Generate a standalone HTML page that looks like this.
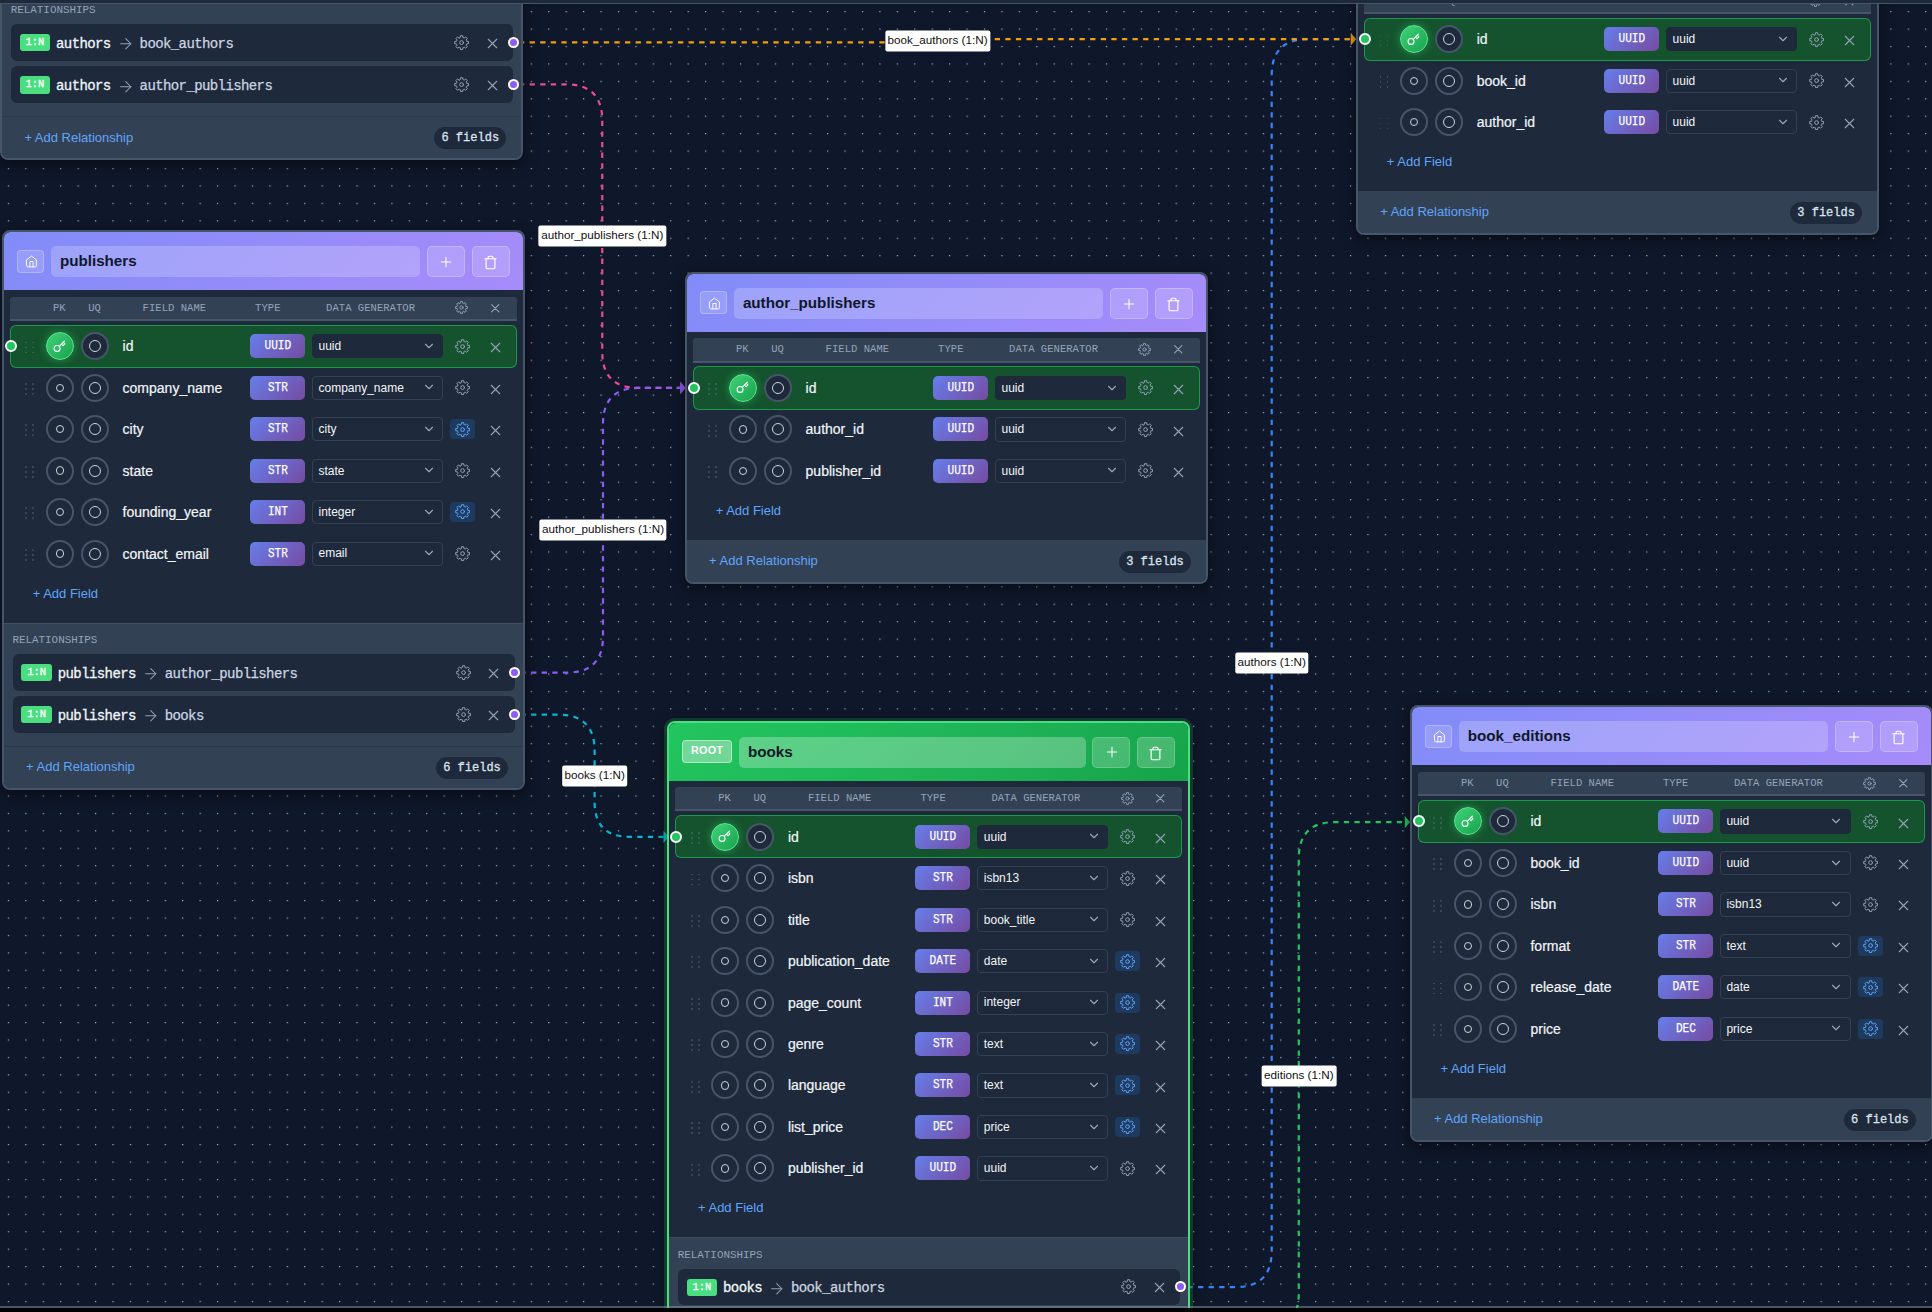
<!DOCTYPE html>
<html><head><meta charset="utf-8"><title>Schema Designer</title><style>
*{box-sizing:border-box;margin:0;padding:0}
html,body{width:1932px;height:1312px;overflow:hidden;background:#000;font-family:"Liberation Sans",sans-serif}
#canvas{position:absolute;left:0;top:0;width:1932px;height:1308px;background:#0f172a;overflow:hidden}
#topbar{position:absolute;left:0;top:0;width:1932px;height:4.1px;background:#1e293b;border-bottom:1.4px solid #475569;z-index:50}
#botline{position:absolute;left:0;top:1306px;width:1932px;height:2px;background:rgba(148,163,184,0.45);z-index:50}
.dots{position:absolute;left:0;top:0}
.edges{position:absolute;left:0;top:0;z-index:1}
.elab{position:absolute;z-index:2;transform:translate(-50%,-50%);background:#fff;border-radius:2px;padding:0 2.6px;height:21.2px;line-height:19.2px;font-size:11.7px;color:#111;white-space:nowrap}
.tbl{position:absolute;width:523px;border:2px solid #475569;border-radius:8px;background:#1e293b;overflow:hidden;z-index:5;box-shadow:0 4px 14px rgba(0,0,0,0.5)}
.tbl.root{border-color:#4ade80;box-shadow:0 0 0 3px rgba(34,197,94,0.22),0 4px 14px rgba(0,0,0,0.5)}
.hdr{position:absolute;left:0;top:0;width:519px;height:58px;border-radius:6px 6px 0 0;background:linear-gradient(135deg,#818cf8 0%,#a78bfa 100%)}
.root .hdr{background:linear-gradient(135deg,#22c55e 0%,#1eb356 60%,#16a34a 100%)}
.root .name{background:rgba(255,255,255,0.27)}
.root .hbtn{background:rgba(255,255,255,0.2);border-color:rgba(255,255,255,0.2)}
.homeb{position:absolute;left:13.3px;top:17.5px;width:27px;height:23px;border-radius:4px;background:rgba(255,255,255,0.15);border:1px solid rgba(255,255,255,0.26)}
.homeb .ic{position:absolute;left:6.5px;top:4.5px;width:13px;height:13px;stroke:#fff;stroke-width:1.8}
.rootb{position:absolute;left:13.2px;top:17.5px;width:49.4px;height:22.5px;border-radius:4px;background:rgba(255,255,255,0.36);border:1px solid rgba(255,255,255,0.45);color:#fff;font-weight:700;font-size:10.8px;text-align:center;line-height:19px;letter-spacing:0.2px}
.name{position:absolute;left:47.2px;top:14px;width:368.8px;height:31px;border-radius:5px;background:rgba(255,255,255,0.2);font-weight:700;font-size:15.2px;color:#0f172a;line-height:29.6px;padding-left:8.8px}
.hbtn{position:absolute;top:14.1px;width:38px;height:31px;border-radius:5px;background:rgba(255,255,255,0.17);border:1px solid rgba(255,255,255,0.24)}
.hbtn .plus{position:absolute;left:10.6px;top:6.6px;width:16px;height:16px;stroke:#fff;stroke-width:1.6}
.hbtn .trash{position:absolute;left:10.2px;top:7.8px;width:15px;height:15px;stroke:#fff;stroke-width:1.9}
.ic{fill:none;stroke-linecap:round;stroke-linejoin:round;display:block}
.colh{position:absolute;left:6.2px;top:64.6px;width:506.9px;height:24.2px;background:#334155;border-bottom:2px solid #475569;border-radius:3px 3px 0 0}
.ct{position:absolute;top:0;height:22.2px;line-height:22.2px;font-family:"Liberation Mono",monospace;font-size:10.5px;color:#94a3b8;white-space:nowrap;letter-spacing:0.05px}
.cg{position:absolute;top:4.6px;width:13px;height:13px;margin-left:1px}
.cg .ic{width:13px;height:13px;stroke:#94a3b8;stroke-width:1.75}
.cx{position:absolute;top:3.8px;width:14.5px;height:14.5px;margin-left:1.2px}
.cx .ic{width:14.5px;height:14.5px;stroke:#94a3b8;stroke-width:1.8}
.pkrow{position:absolute;left:6.3px;width:506.8px;height:43.2px;background:#14532d;border:1.5px solid rgba(34,197,94,0.62);border-radius:6px}
.row{position:absolute;left:0;width:519px;height:40px}
.drag{position:absolute;left:21.5px;top:15.3px;width:9px;height:12px}
.drag i{position:absolute;width:1.9px;height:1.9px;border-radius:50%;background:rgba(148,163,184,0.3)}
.drag i:nth-child(1){left:0;top:0}.drag i:nth-child(2){left:7.1px;top:0}
.drag i:nth-child(3){left:0;top:5px}.drag i:nth-child(4){left:7.1px;top:5px}
.drag i:nth-child(5){left:0;top:10px}.drag i:nth-child(6){left:7.1px;top:10px}
.circ{position:absolute;top:6px;width:28px;height:28px;border-radius:50%;border:2px solid #475569}
.circ.c1{left:42px}
.circ.c2{left:77.1px}
.circ.c1,.circ.c2{background:#1e293b}
.circ.c1 b{position:absolute;left:50%;top:50%;width:8.4px;height:8.4px;margin:-4.2px 0 0 -4.2px;border-radius:50%;border:1px solid #cbd5e1}
.circ.c2 b{position:absolute;left:50%;top:50%;width:12px;height:12px;margin:-6px 0 0 -6px;border-radius:50%;border:1px solid #cbd5e1}
.circ.pk{left:42px;border:1.5px solid #5ee895;background:linear-gradient(135deg,#3fd27a 0%,#17a34b 100%);box-shadow:0 0 8px rgba(74,222,128,0.45)}
.circ.pk .ic{position:absolute;left:6.3px;top:6.5px;width:13px;height:13px;stroke:#fff;stroke-width:2}
.fname{position:absolute;left:118.7px;top:0;height:40px;line-height:40px;font-size:14px;color:#f1f5f9;white-space:nowrap;-webkit-text-stroke:0.2px #f1f5f9}
.badge{position:absolute;left:246.3px;top:8px;width:54.6px;height:24px;border-radius:5px;background:linear-gradient(135deg,#667eea 0%,#764ba2 100%);color:#fff;font-family:"Liberation Mono",monospace;font-size:13.2px;text-align:center;line-height:24px}
.badge span{display:inline-block;transform:scaleX(0.84);-webkit-text-stroke:0.25px #fff}
.sel{position:absolute;left:308px;top:8px;width:131px;height:24.2px;border-radius:4px;border:1px solid #334155;background:#1e293b}
.sel.selpk{border-color:#1e293b}
.sel span{position:absolute;left:5.6px;top:0.9px;line-height:21.6px;font-size:12px;color:#f1f5f9}
.sel .chev{position:absolute;left:108.7px;top:3.6px;width:14px;height:14px;stroke:#9aa8bd;stroke-width:1.9}
.gbtn{position:absolute;left:445.9px;top:10px;width:25px;height:20px;border-radius:4px}
.gbtn.hl{background:#1e3a5f}
.gbtn .ic{position:absolute;left:4.9px;top:2.4px;width:15.2px;height:15.2px;stroke:#94a3b8;stroke-width:1.55}
.gbtn.hl .ic{stroke:#60a5fa}
.xbtn{position:absolute;left:483.3px;top:13.1px;width:17px;height:17px}
.xbtn .ic{width:17px;height:17px;stroke:#94a3b8;stroke-width:1.6}
.handle{position:absolute;width:12px;height:12px;border-radius:50%;border:2px solid #fff;z-index:3}
.handle.hg{background:#22c55e}
.handle.hp{width:11px;height:11px;background:#8b5cf6}
.addf{position:absolute;left:28.8px;height:16px;line-height:16px;font-size:13px;color:#60a5fa;white-space:nowrap}
.rels{position:absolute;left:0;width:519px;background:#334155;box-shadow:inset 0 1px 0 rgba(71,85,105,0.7)}
.rtitle{position:absolute;left:8.5px;top:10.2px;line-height:14px;font-family:"Liberation Mono",monospace;font-size:10.9px;color:#94a3b8}
.ritem{position:absolute;left:8.8px;width:501.9px;height:36.8px;border-radius:6px;background:#1e293b;display:flex;align-items:center;padding-left:8.6px}
.rbadge{flex:none;width:30.7px;height:17.4px;margin-top:0.6px;border-radius:3px;background:#4ade80;color:#fff;font-family:"Liberation Mono",monospace;font-size:10.5px;text-align:center;line-height:17.4px;-webkit-text-stroke:0.3px #fff}
.rsrc{flex:none;margin-left:5.8px;position:relative;top:1.5px;font-family:"Liberation Mono",monospace;font-size:14px;letter-spacing:-0.6px;color:#f1f5f9;white-space:nowrap;line-height:20px;-webkit-text-stroke:0.3px #f1f5f9}
.ritem .arr{flex:none;margin-left:6.4px;position:relative;top:1.8px;width:17.5px;height:17.5px;stroke:#94a3b8;stroke-width:1.4}
.rdst{flex:none;margin-left:5px;position:relative;top:1.5px;font-family:"Liberation Mono",monospace;font-size:14px;letter-spacing:-0.6px;color:#cbd5e1;white-space:nowrap;line-height:20px;-webkit-text-stroke:0.25px #cbd5e1}
.rgear{position:absolute;left:442.9px;top:10.8px;width:15.2px;height:15.2px}
.rgear .ic{width:15.2px;height:15.2px;stroke:#94a3b8;stroke-width:1.55}
.rx{position:absolute;left:472.7px;top:10.9px;width:17px;height:17px}
.rx .ic{width:17px;height:17px;stroke:#94a3b8;stroke-width:1.6}
.foot{position:absolute;left:0;width:519px;height:44px;background:#334155}
.foot.ftl{box-shadow:inset 0 1px 0 rgba(30,41,59,0.35)}
.foot.ftl .addr,.foot.ftl .pill{margin-top:0.8px}
.addr{position:absolute;left:22.2px;top:13px;line-height:16px;font-size:13px;color:#60a5fa;white-space:nowrap}
.pill{position:absolute;left:431px;top:9.8px;width:74.2px;height:24px;border-radius:12px;background:#1e293b;border:1px solid rgba(71,85,105,0.55);color:#dbe3ee;font-family:"Liberation Mono",monospace;font-size:12px;text-align:center;line-height:23px;-webkit-text-stroke:0.3px #dbe3ee}
</style></head>
<body>
<div id="canvas">
<svg class="dots" width="1932" height="1312"><defs><pattern id="dp" x="7.83" y="11.07" width="17.43" height="17.43" patternUnits="userSpaceOnUse"><rect x="0" y="0" width="1.2" height="1.2" fill="#aab3c2"/></pattern></defs><rect width="1932" height="1312" fill="url(#dp)"/></svg>
<svg class="edges" width="1932" height="1312" viewBox="0 0 1932 1312"><path d="M1187.40 1287.10 L1235.70 1287.10 Q1271.70 1287.10 1271.70 1251.10 L1271.70 75.20 Q1271.70 39.20 1307.70 39.20 L1351.50 39.20" stroke="#3b82f6" stroke-width="2.2" fill="none" stroke-dasharray="5.3 5.3"/><path d="M1350.80 33.10 L1356.00 39.20 L1350.80 45.30 Z" fill="#3b82f6"/><path d="M519.00 42.30 L935.95 42.30 Q937.50 42.30 937.50 40.75 L937.50 40.75 Q937.50 39.20 939.05 39.20 L1351.50 39.20" stroke="#f59e0b" stroke-width="2.2" fill="none" stroke-dasharray="5.3 5.3"/><path d="M1350.80 33.10 L1356.00 39.20 L1350.80 45.30 Z" fill="#f59e0b"/><path d="M519.00 84.40 L566.25 84.40 Q602.25 84.40 602.25 120.40 L602.25 351.90 Q602.25 387.90 638.25 387.90 L681.00 387.90" stroke="#ec4899" stroke-width="2.2" fill="none" stroke-dasharray="5.3 5.3"/><path d="M680.30 381.80 L685.50 387.90 L680.30 394.00 Z" fill="#ec4899"/><path d="M520.50 672.60 L567.00 672.60 Q603.00 672.60 603.00 636.60 L603.00 423.90 Q603.00 387.90 639.00 387.90 L681.00 387.90" stroke="#8b5cf6" stroke-width="2.2" fill="none" stroke-dasharray="5.3 5.3"/><path d="M680.30 381.80 L685.50 387.90 L680.30 394.00 Z" fill="#8b5cf6"/><path d="M520.50 714.70 L558.60 714.70 Q594.60 714.70 594.60 750.70 L594.60 802.00 Q594.60 836.80 629.40 836.80 L664.20 836.80" stroke="#06b6d4" stroke-width="2.2" fill="none" stroke-dasharray="5.3 5.3"/><path d="M663.50 830.70 L668.70 836.80 L663.50 842.90 Z" fill="#06b6d4"/><path d="M1187.60 1329.20 L1262.80 1329.20 Q1298.80 1329.20 1298.80 1293.20 L1298.80 858.10 Q1298.80 822.10 1334.80 822.10 L1405.50 822.10" stroke="#22c55e" stroke-width="2.2" fill="none" stroke-dasharray="5.3 5.3"/><path d="M1404.80 816.00 L1410.00 822.10 L1404.80 828.20 Z" fill="#22c55e"/></svg>
<div class="elab" style="left:1271.70px;top:663.15px">authors (1:N)</div><div class="elab" style="left:937.50px;top:40.75px">book_authors (1:N)</div><div class="elab" style="left:602.25px;top:236.15px">author_publishers (1:N)</div><div class="elab" style="left:603.00px;top:530.25px">author_publishers (1:N)</div><div class="elab" style="left:594.60px;top:775.75px">books (1:N)</div><div class="elab" style="left:1298.80px;top:1075.65px">editions (1:N)</div>
<div class="tbl" style="left:0.2px;top:-399.5px;height:559.55px">
<div class="hdr">
<div class="homeb"><svg class="ic home" viewBox="0 0 24 24"><path d="m3 9 9-7 9 7v11a2 2 0 0 1-2 2H5a2 2 0 0 1-2-2z"/><path d="M9 22V12h6v10"/></svg></div>
<div class="name">authors</div>
<div class="hbtn" style="left:423px"><svg class="ic plus" viewBox="0 0 24 24"><path d="M5 12h14M12 5v14"/></svg></div>
<div class="hbtn" style="left:468px"><svg class="ic trash" viewBox="0 0 24 24"><path d="M3 6h18"/><path d="M19 6v14c0 1-1 2-2 2H7c-1 0-2-1-2-2V6"/><path d="M8 6V4c0-1 1-2 2-2h4c1 0 2 1 2 2v2"/></svg></div>
</div>
<div class="colh"><span class="ct" style="left:42.9px;width:12px;text-align:center">PK</span><span class="ct" style="left:78.1px;width:12px;text-align:center">UQ</span><span class="ct" style="left:132.5px">FIELD NAME</span><span class="ct" style="left:245px">TYPE</span><span class="ct" style="left:316px">DATA GENERATOR</span><span class="cg" style="left:444.3px"><svg class="ic gear" viewBox="0 0 24 24"><circle cx="12" cy="12" r="3"/><path d="M8.86 4.42 L9.88 4.08 L10.18 1.15 L13.82 1.15 L14.12 4.08 L15.14 4.42 L16.10 4.90 L18.39 3.04 L20.96 5.61 L19.10 7.90 L19.58 8.86 L19.92 9.88 L22.85 10.18 L22.85 13.82 L19.92 14.12 L19.58 15.14 L19.10 16.10 L20.96 18.39 L18.39 20.96 L16.10 19.10 L15.14 19.58 L14.12 19.92 L13.82 22.85 L10.18 22.85 L9.88 19.92 L8.86 19.58 L7.90 19.10 L5.61 20.96 L3.04 18.39 L4.90 16.10 L4.42 15.14 L4.08 14.12 L1.15 13.82 L1.15 10.18 L4.08 9.88 L4.42 8.86 L4.90 7.90 L3.04 5.61 L5.61 3.04 L7.90 4.90Z"/></svg></span><span class="cx" style="left:476.4px"><svg class="ic x" viewBox="0 0 24 24"><path d="M18 6 6 18M6 6l12 12"/></svg></span></div>
<div class="pkrow" style="top:92.60px"></div>
<div class="handle hg" style="top:108.10px;left:1px"></div>
<div class="row" style="top:94.10px">
<div class="drag"><i></i><i></i><i></i><i></i><i></i><i></i></div>
<div class="circ pk"><svg class="ic key" viewBox="0 0 24 24"><circle cx="7.5" cy="15.5" r="5.5"/><path d="m21 2-9.6 9.6"/><path d="m15.5 7.5 3 3L22 7l-3-3"/></svg></div>
<div class="circ c2"><b></b></div>
<div class="fname">id</div>
<div class="badge"><span>UUID</span></div>
<div class="sel selpk"><span>uuid</span><svg class="ic chev" viewBox="0 0 24 24"><path d="m6 9 6 6 6-6"/></svg></div>
<div class="gbtn"><svg class="ic gear" viewBox="0 0 24 24"><circle cx="12" cy="12" r="3"/><path d="M8.86 4.42 L9.88 4.08 L10.18 1.15 L13.82 1.15 L14.12 4.08 L15.14 4.42 L16.10 4.90 L18.39 3.04 L20.96 5.61 L19.10 7.90 L19.58 8.86 L19.92 9.88 L22.85 10.18 L22.85 13.82 L19.92 14.12 L19.58 15.14 L19.10 16.10 L20.96 18.39 L18.39 20.96 L16.10 19.10 L15.14 19.58 L14.12 19.92 L13.82 22.85 L10.18 22.85 L9.88 19.92 L8.86 19.58 L7.90 19.10 L5.61 20.96 L3.04 18.39 L4.90 16.10 L4.42 15.14 L4.08 14.12 L1.15 13.82 L1.15 10.18 L4.08 9.88 L4.42 8.86 L4.90 7.90 L3.04 5.61 L5.61 3.04 L7.90 4.90Z"/></svg></div>
<div class="xbtn"><svg class="ic x" viewBox="0 0 24 24"><path d="M18 6 6 18M6 6l12 12"/></svg></div>
</div>
<div class="row" style="top:135.55px">
<div class="drag"><i></i><i></i><i></i><i></i><i></i><i></i></div>
<div class="circ c1"><b></b></div>
<div class="circ c2"><b></b></div>
<div class="fname">f0</div>
<div class="badge"><span>STR</span></div>
<div class="sel"><span>text</span><svg class="ic chev" viewBox="0 0 24 24"><path d="m6 9 6 6 6-6"/></svg></div>
<div class="gbtn"><svg class="ic gear" viewBox="0 0 24 24"><circle cx="12" cy="12" r="3"/><path d="M8.86 4.42 L9.88 4.08 L10.18 1.15 L13.82 1.15 L14.12 4.08 L15.14 4.42 L16.10 4.90 L18.39 3.04 L20.96 5.61 L19.10 7.90 L19.58 8.86 L19.92 9.88 L22.85 10.18 L22.85 13.82 L19.92 14.12 L19.58 15.14 L19.10 16.10 L20.96 18.39 L18.39 20.96 L16.10 19.10 L15.14 19.58 L14.12 19.92 L13.82 22.85 L10.18 22.85 L9.88 19.92 L8.86 19.58 L7.90 19.10 L5.61 20.96 L3.04 18.39 L4.90 16.10 L4.42 15.14 L4.08 14.12 L1.15 13.82 L1.15 10.18 L4.08 9.88 L4.42 8.86 L4.90 7.90 L3.04 5.61 L5.61 3.04 L7.90 4.90Z"/></svg></div>
<div class="xbtn"><svg class="ic x" viewBox="0 0 24 24"><path d="M18 6 6 18M6 6l12 12"/></svg></div>
</div>
<div class="row" style="top:177.00px">
<div class="drag"><i></i><i></i><i></i><i></i><i></i><i></i></div>
<div class="circ c1"><b></b></div>
<div class="circ c2"><b></b></div>
<div class="fname">f1</div>
<div class="badge"><span>STR</span></div>
<div class="sel"><span>text</span><svg class="ic chev" viewBox="0 0 24 24"><path d="m6 9 6 6 6-6"/></svg></div>
<div class="gbtn"><svg class="ic gear" viewBox="0 0 24 24"><circle cx="12" cy="12" r="3"/><path d="M8.86 4.42 L9.88 4.08 L10.18 1.15 L13.82 1.15 L14.12 4.08 L15.14 4.42 L16.10 4.90 L18.39 3.04 L20.96 5.61 L19.10 7.90 L19.58 8.86 L19.92 9.88 L22.85 10.18 L22.85 13.82 L19.92 14.12 L19.58 15.14 L19.10 16.10 L20.96 18.39 L18.39 20.96 L16.10 19.10 L15.14 19.58 L14.12 19.92 L13.82 22.85 L10.18 22.85 L9.88 19.92 L8.86 19.58 L7.90 19.10 L5.61 20.96 L3.04 18.39 L4.90 16.10 L4.42 15.14 L4.08 14.12 L1.15 13.82 L1.15 10.18 L4.08 9.88 L4.42 8.86 L4.90 7.90 L3.04 5.61 L5.61 3.04 L7.90 4.90Z"/></svg></div>
<div class="xbtn"><svg class="ic x" viewBox="0 0 24 24"><path d="M18 6 6 18M6 6l12 12"/></svg></div>
</div>
<div class="row" style="top:218.45px">
<div class="drag"><i></i><i></i><i></i><i></i><i></i><i></i></div>
<div class="circ c1"><b></b></div>
<div class="circ c2"><b></b></div>
<div class="fname">f2</div>
<div class="badge"><span>STR</span></div>
<div class="sel"><span>text</span><svg class="ic chev" viewBox="0 0 24 24"><path d="m6 9 6 6 6-6"/></svg></div>
<div class="gbtn"><svg class="ic gear" viewBox="0 0 24 24"><circle cx="12" cy="12" r="3"/><path d="M8.86 4.42 L9.88 4.08 L10.18 1.15 L13.82 1.15 L14.12 4.08 L15.14 4.42 L16.10 4.90 L18.39 3.04 L20.96 5.61 L19.10 7.90 L19.58 8.86 L19.92 9.88 L22.85 10.18 L22.85 13.82 L19.92 14.12 L19.58 15.14 L19.10 16.10 L20.96 18.39 L18.39 20.96 L16.10 19.10 L15.14 19.58 L14.12 19.92 L13.82 22.85 L10.18 22.85 L9.88 19.92 L8.86 19.58 L7.90 19.10 L5.61 20.96 L3.04 18.39 L4.90 16.10 L4.42 15.14 L4.08 14.12 L1.15 13.82 L1.15 10.18 L4.08 9.88 L4.42 8.86 L4.90 7.90 L3.04 5.61 L5.61 3.04 L7.90 4.90Z"/></svg></div>
<div class="xbtn"><svg class="ic x" viewBox="0 0 24 24"><path d="M18 6 6 18M6 6l12 12"/></svg></div>
</div>
<div class="row" style="top:259.90px">
<div class="drag"><i></i><i></i><i></i><i></i><i></i><i></i></div>
<div class="circ c1"><b></b></div>
<div class="circ c2"><b></b></div>
<div class="fname">f3</div>
<div class="badge"><span>STR</span></div>
<div class="sel"><span>text</span><svg class="ic chev" viewBox="0 0 24 24"><path d="m6 9 6 6 6-6"/></svg></div>
<div class="gbtn"><svg class="ic gear" viewBox="0 0 24 24"><circle cx="12" cy="12" r="3"/><path d="M8.86 4.42 L9.88 4.08 L10.18 1.15 L13.82 1.15 L14.12 4.08 L15.14 4.42 L16.10 4.90 L18.39 3.04 L20.96 5.61 L19.10 7.90 L19.58 8.86 L19.92 9.88 L22.85 10.18 L22.85 13.82 L19.92 14.12 L19.58 15.14 L19.10 16.10 L20.96 18.39 L18.39 20.96 L16.10 19.10 L15.14 19.58 L14.12 19.92 L13.82 22.85 L10.18 22.85 L9.88 19.92 L8.86 19.58 L7.90 19.10 L5.61 20.96 L3.04 18.39 L4.90 16.10 L4.42 15.14 L4.08 14.12 L1.15 13.82 L1.15 10.18 L4.08 9.88 L4.42 8.86 L4.90 7.90 L3.04 5.61 L5.61 3.04 L7.90 4.90Z"/></svg></div>
<div class="xbtn"><svg class="ic x" viewBox="0 0 24 24"><path d="M18 6 6 18M6 6l12 12"/></svg></div>
</div>
<div class="row" style="top:301.35px">
<div class="drag"><i></i><i></i><i></i><i></i><i></i><i></i></div>
<div class="circ c1"><b></b></div>
<div class="circ c2"><b></b></div>
<div class="fname">f4</div>
<div class="badge"><span>STR</span></div>
<div class="sel"><span>text</span><svg class="ic chev" viewBox="0 0 24 24"><path d="m6 9 6 6 6-6"/></svg></div>
<div class="gbtn"><svg class="ic gear" viewBox="0 0 24 24"><circle cx="12" cy="12" r="3"/><path d="M8.86 4.42 L9.88 4.08 L10.18 1.15 L13.82 1.15 L14.12 4.08 L15.14 4.42 L16.10 4.90 L18.39 3.04 L20.96 5.61 L19.10 7.90 L19.58 8.86 L19.92 9.88 L22.85 10.18 L22.85 13.82 L19.92 14.12 L19.58 15.14 L19.10 16.10 L20.96 18.39 L18.39 20.96 L16.10 19.10 L15.14 19.58 L14.12 19.92 L13.82 22.85 L10.18 22.85 L9.88 19.92 L8.86 19.58 L7.90 19.10 L5.61 20.96 L3.04 18.39 L4.90 16.10 L4.42 15.14 L4.08 14.12 L1.15 13.82 L1.15 10.18 L4.08 9.88 L4.42 8.86 L4.90 7.90 L3.04 5.61 L5.61 3.04 L7.90 4.90Z"/></svg></div>
<div class="xbtn"><svg class="ic x" viewBox="0 0 24 24"><path d="M18 6 6 18M6 6l12 12"/></svg></div>
</div>
<div class="addf" style="top:353.35px">+ Add Field</div>
<div class="rels" style="top:390.35px;height:124.00px">
<div class="rtitle">RELATIONSHIPS</div>
<div class="ritem" style="top:31.20px"><span class="rbadge">1:N</span><span class="rsrc">authors</span><svg class="ic arr" viewBox="0 0 24 24"><path d="M5 12h14"/><path d="m12 5 7 7-7 7"/></svg><span class="rdst">book_authors</span><span class="rgear"><svg class="ic gear" viewBox="0 0 24 24"><circle cx="12" cy="12" r="3"/><path d="M8.86 4.42 L9.88 4.08 L10.18 1.15 L13.82 1.15 L14.12 4.08 L15.14 4.42 L16.10 4.90 L18.39 3.04 L20.96 5.61 L19.10 7.90 L19.58 8.86 L19.92 9.88 L22.85 10.18 L22.85 13.82 L19.92 14.12 L19.58 15.14 L19.10 16.10 L20.96 18.39 L18.39 20.96 L16.10 19.10 L15.14 19.58 L14.12 19.92 L13.82 22.85 L10.18 22.85 L9.88 19.92 L8.86 19.58 L7.90 19.10 L5.61 20.96 L3.04 18.39 L4.90 16.10 L4.42 15.14 L4.08 14.12 L1.15 13.82 L1.15 10.18 L4.08 9.88 L4.42 8.86 L4.90 7.90 L3.04 5.61 L5.61 3.04 L7.90 4.90Z"/></svg></span><span class="rx"><svg class="ic x" viewBox="0 0 24 24"><path d="M18 6 6 18M6 6l12 12"/></svg></span></div>
<div class="handle hp" style="top:44.10px;left:505.5px"></div>
<div class="ritem" style="top:73.30px"><span class="rbadge">1:N</span><span class="rsrc">authors</span><svg class="ic arr" viewBox="0 0 24 24"><path d="M5 12h14"/><path d="m12 5 7 7-7 7"/></svg><span class="rdst">author_publishers</span><span class="rgear"><svg class="ic gear" viewBox="0 0 24 24"><circle cx="12" cy="12" r="3"/><path d="M8.86 4.42 L9.88 4.08 L10.18 1.15 L13.82 1.15 L14.12 4.08 L15.14 4.42 L16.10 4.90 L18.39 3.04 L20.96 5.61 L19.10 7.90 L19.58 8.86 L19.92 9.88 L22.85 10.18 L22.85 13.82 L19.92 14.12 L19.58 15.14 L19.10 16.10 L20.96 18.39 L18.39 20.96 L16.10 19.10 L15.14 19.58 L14.12 19.92 L13.82 22.85 L10.18 22.85 L9.88 19.92 L8.86 19.58 L7.90 19.10 L5.61 20.96 L3.04 18.39 L4.90 16.10 L4.42 15.14 L4.08 14.12 L1.15 13.82 L1.15 10.18 L4.08 9.88 L4.42 8.86 L4.90 7.90 L3.04 5.61 L5.61 3.04 L7.90 4.90Z"/></svg></span><span class="rx"><svg class="ic x" viewBox="0 0 24 24"><path d="M18 6 6 18M6 6l12 12"/></svg></span></div>
<div class="handle hp" style="top:86.20px;left:505.5px"></div>
</div>
<div class="foot ftl" style="top:513.35px"><div class="addr">+ Add Relationship</div><div class="pill">6 fields</div></div>
</div>
<div class="tbl" style="left:1.9px;top:230.2px;height:559.55px">
<div class="hdr">
<div class="homeb"><svg class="ic home" viewBox="0 0 24 24"><path d="m3 9 9-7 9 7v11a2 2 0 0 1-2 2H5a2 2 0 0 1-2-2z"/><path d="M9 22V12h6v10"/></svg></div>
<div class="name">publishers</div>
<div class="hbtn" style="left:423px"><svg class="ic plus" viewBox="0 0 24 24"><path d="M5 12h14M12 5v14"/></svg></div>
<div class="hbtn" style="left:468px"><svg class="ic trash" viewBox="0 0 24 24"><path d="M3 6h18"/><path d="M19 6v14c0 1-1 2-2 2H7c-1 0-2-1-2-2V6"/><path d="M8 6V4c0-1 1-2 2-2h4c1 0 2 1 2 2v2"/></svg></div>
</div>
<div class="colh"><span class="ct" style="left:42.9px;width:12px;text-align:center">PK</span><span class="ct" style="left:78.1px;width:12px;text-align:center">UQ</span><span class="ct" style="left:132.5px">FIELD NAME</span><span class="ct" style="left:245px">TYPE</span><span class="ct" style="left:316px">DATA GENERATOR</span><span class="cg" style="left:444.3px"><svg class="ic gear" viewBox="0 0 24 24"><circle cx="12" cy="12" r="3"/><path d="M8.86 4.42 L9.88 4.08 L10.18 1.15 L13.82 1.15 L14.12 4.08 L15.14 4.42 L16.10 4.90 L18.39 3.04 L20.96 5.61 L19.10 7.90 L19.58 8.86 L19.92 9.88 L22.85 10.18 L22.85 13.82 L19.92 14.12 L19.58 15.14 L19.10 16.10 L20.96 18.39 L18.39 20.96 L16.10 19.10 L15.14 19.58 L14.12 19.92 L13.82 22.85 L10.18 22.85 L9.88 19.92 L8.86 19.58 L7.90 19.10 L5.61 20.96 L3.04 18.39 L4.90 16.10 L4.42 15.14 L4.08 14.12 L1.15 13.82 L1.15 10.18 L4.08 9.88 L4.42 8.86 L4.90 7.90 L3.04 5.61 L5.61 3.04 L7.90 4.90Z"/></svg></span><span class="cx" style="left:476.4px"><svg class="ic x" viewBox="0 0 24 24"><path d="M18 6 6 18M6 6l12 12"/></svg></span></div>
<div class="pkrow" style="top:92.60px"></div>
<div class="handle hg" style="top:108.10px;left:1px"></div>
<div class="row" style="top:94.10px">
<div class="drag"><i></i><i></i><i></i><i></i><i></i><i></i></div>
<div class="circ pk"><svg class="ic key" viewBox="0 0 24 24"><circle cx="7.5" cy="15.5" r="5.5"/><path d="m21 2-9.6 9.6"/><path d="m15.5 7.5 3 3L22 7l-3-3"/></svg></div>
<div class="circ c2"><b></b></div>
<div class="fname">id</div>
<div class="badge"><span>UUID</span></div>
<div class="sel selpk"><span>uuid</span><svg class="ic chev" viewBox="0 0 24 24"><path d="m6 9 6 6 6-6"/></svg></div>
<div class="gbtn"><svg class="ic gear" viewBox="0 0 24 24"><circle cx="12" cy="12" r="3"/><path d="M8.86 4.42 L9.88 4.08 L10.18 1.15 L13.82 1.15 L14.12 4.08 L15.14 4.42 L16.10 4.90 L18.39 3.04 L20.96 5.61 L19.10 7.90 L19.58 8.86 L19.92 9.88 L22.85 10.18 L22.85 13.82 L19.92 14.12 L19.58 15.14 L19.10 16.10 L20.96 18.39 L18.39 20.96 L16.10 19.10 L15.14 19.58 L14.12 19.92 L13.82 22.85 L10.18 22.85 L9.88 19.92 L8.86 19.58 L7.90 19.10 L5.61 20.96 L3.04 18.39 L4.90 16.10 L4.42 15.14 L4.08 14.12 L1.15 13.82 L1.15 10.18 L4.08 9.88 L4.42 8.86 L4.90 7.90 L3.04 5.61 L5.61 3.04 L7.90 4.90Z"/></svg></div>
<div class="xbtn"><svg class="ic x" viewBox="0 0 24 24"><path d="M18 6 6 18M6 6l12 12"/></svg></div>
</div>
<div class="row" style="top:135.55px">
<div class="drag"><i></i><i></i><i></i><i></i><i></i><i></i></div>
<div class="circ c1"><b></b></div>
<div class="circ c2"><b></b></div>
<div class="fname">company_name</div>
<div class="badge"><span>STR</span></div>
<div class="sel"><span>company_name</span><svg class="ic chev" viewBox="0 0 24 24"><path d="m6 9 6 6 6-6"/></svg></div>
<div class="gbtn"><svg class="ic gear" viewBox="0 0 24 24"><circle cx="12" cy="12" r="3"/><path d="M8.86 4.42 L9.88 4.08 L10.18 1.15 L13.82 1.15 L14.12 4.08 L15.14 4.42 L16.10 4.90 L18.39 3.04 L20.96 5.61 L19.10 7.90 L19.58 8.86 L19.92 9.88 L22.85 10.18 L22.85 13.82 L19.92 14.12 L19.58 15.14 L19.10 16.10 L20.96 18.39 L18.39 20.96 L16.10 19.10 L15.14 19.58 L14.12 19.92 L13.82 22.85 L10.18 22.85 L9.88 19.92 L8.86 19.58 L7.90 19.10 L5.61 20.96 L3.04 18.39 L4.90 16.10 L4.42 15.14 L4.08 14.12 L1.15 13.82 L1.15 10.18 L4.08 9.88 L4.42 8.86 L4.90 7.90 L3.04 5.61 L5.61 3.04 L7.90 4.90Z"/></svg></div>
<div class="xbtn"><svg class="ic x" viewBox="0 0 24 24"><path d="M18 6 6 18M6 6l12 12"/></svg></div>
</div>
<div class="row" style="top:177.00px">
<div class="drag"><i></i><i></i><i></i><i></i><i></i><i></i></div>
<div class="circ c1"><b></b></div>
<div class="circ c2"><b></b></div>
<div class="fname">city</div>
<div class="badge"><span>STR</span></div>
<div class="sel"><span>city</span><svg class="ic chev" viewBox="0 0 24 24"><path d="m6 9 6 6 6-6"/></svg></div>
<div class="gbtn hl"><svg class="ic gear" viewBox="0 0 24 24"><circle cx="12" cy="12" r="3"/><path d="M8.86 4.42 L9.88 4.08 L10.18 1.15 L13.82 1.15 L14.12 4.08 L15.14 4.42 L16.10 4.90 L18.39 3.04 L20.96 5.61 L19.10 7.90 L19.58 8.86 L19.92 9.88 L22.85 10.18 L22.85 13.82 L19.92 14.12 L19.58 15.14 L19.10 16.10 L20.96 18.39 L18.39 20.96 L16.10 19.10 L15.14 19.58 L14.12 19.92 L13.82 22.85 L10.18 22.85 L9.88 19.92 L8.86 19.58 L7.90 19.10 L5.61 20.96 L3.04 18.39 L4.90 16.10 L4.42 15.14 L4.08 14.12 L1.15 13.82 L1.15 10.18 L4.08 9.88 L4.42 8.86 L4.90 7.90 L3.04 5.61 L5.61 3.04 L7.90 4.90Z"/></svg></div>
<div class="xbtn"><svg class="ic x" viewBox="0 0 24 24"><path d="M18 6 6 18M6 6l12 12"/></svg></div>
</div>
<div class="row" style="top:218.45px">
<div class="drag"><i></i><i></i><i></i><i></i><i></i><i></i></div>
<div class="circ c1"><b></b></div>
<div class="circ c2"><b></b></div>
<div class="fname">state</div>
<div class="badge"><span>STR</span></div>
<div class="sel"><span>state</span><svg class="ic chev" viewBox="0 0 24 24"><path d="m6 9 6 6 6-6"/></svg></div>
<div class="gbtn"><svg class="ic gear" viewBox="0 0 24 24"><circle cx="12" cy="12" r="3"/><path d="M8.86 4.42 L9.88 4.08 L10.18 1.15 L13.82 1.15 L14.12 4.08 L15.14 4.42 L16.10 4.90 L18.39 3.04 L20.96 5.61 L19.10 7.90 L19.58 8.86 L19.92 9.88 L22.85 10.18 L22.85 13.82 L19.92 14.12 L19.58 15.14 L19.10 16.10 L20.96 18.39 L18.39 20.96 L16.10 19.10 L15.14 19.58 L14.12 19.92 L13.82 22.85 L10.18 22.85 L9.88 19.92 L8.86 19.58 L7.90 19.10 L5.61 20.96 L3.04 18.39 L4.90 16.10 L4.42 15.14 L4.08 14.12 L1.15 13.82 L1.15 10.18 L4.08 9.88 L4.42 8.86 L4.90 7.90 L3.04 5.61 L5.61 3.04 L7.90 4.90Z"/></svg></div>
<div class="xbtn"><svg class="ic x" viewBox="0 0 24 24"><path d="M18 6 6 18M6 6l12 12"/></svg></div>
</div>
<div class="row" style="top:259.90px">
<div class="drag"><i></i><i></i><i></i><i></i><i></i><i></i></div>
<div class="circ c1"><b></b></div>
<div class="circ c2"><b></b></div>
<div class="fname">founding_year</div>
<div class="badge"><span>INT</span></div>
<div class="sel"><span>integer</span><svg class="ic chev" viewBox="0 0 24 24"><path d="m6 9 6 6 6-6"/></svg></div>
<div class="gbtn hl"><svg class="ic gear" viewBox="0 0 24 24"><circle cx="12" cy="12" r="3"/><path d="M8.86 4.42 L9.88 4.08 L10.18 1.15 L13.82 1.15 L14.12 4.08 L15.14 4.42 L16.10 4.90 L18.39 3.04 L20.96 5.61 L19.10 7.90 L19.58 8.86 L19.92 9.88 L22.85 10.18 L22.85 13.82 L19.92 14.12 L19.58 15.14 L19.10 16.10 L20.96 18.39 L18.39 20.96 L16.10 19.10 L15.14 19.58 L14.12 19.92 L13.82 22.85 L10.18 22.85 L9.88 19.92 L8.86 19.58 L7.90 19.10 L5.61 20.96 L3.04 18.39 L4.90 16.10 L4.42 15.14 L4.08 14.12 L1.15 13.82 L1.15 10.18 L4.08 9.88 L4.42 8.86 L4.90 7.90 L3.04 5.61 L5.61 3.04 L7.90 4.90Z"/></svg></div>
<div class="xbtn"><svg class="ic x" viewBox="0 0 24 24"><path d="M18 6 6 18M6 6l12 12"/></svg></div>
</div>
<div class="row" style="top:301.35px">
<div class="drag"><i></i><i></i><i></i><i></i><i></i><i></i></div>
<div class="circ c1"><b></b></div>
<div class="circ c2"><b></b></div>
<div class="fname">contact_email</div>
<div class="badge"><span>STR</span></div>
<div class="sel"><span>email</span><svg class="ic chev" viewBox="0 0 24 24"><path d="m6 9 6 6 6-6"/></svg></div>
<div class="gbtn"><svg class="ic gear" viewBox="0 0 24 24"><circle cx="12" cy="12" r="3"/><path d="M8.86 4.42 L9.88 4.08 L10.18 1.15 L13.82 1.15 L14.12 4.08 L15.14 4.42 L16.10 4.90 L18.39 3.04 L20.96 5.61 L19.10 7.90 L19.58 8.86 L19.92 9.88 L22.85 10.18 L22.85 13.82 L19.92 14.12 L19.58 15.14 L19.10 16.10 L20.96 18.39 L18.39 20.96 L16.10 19.10 L15.14 19.58 L14.12 19.92 L13.82 22.85 L10.18 22.85 L9.88 19.92 L8.86 19.58 L7.90 19.10 L5.61 20.96 L3.04 18.39 L4.90 16.10 L4.42 15.14 L4.08 14.12 L1.15 13.82 L1.15 10.18 L4.08 9.88 L4.42 8.86 L4.90 7.90 L3.04 5.61 L5.61 3.04 L7.90 4.90Z"/></svg></div>
<div class="xbtn"><svg class="ic x" viewBox="0 0 24 24"><path d="M18 6 6 18M6 6l12 12"/></svg></div>
</div>
<div class="addf" style="top:353.35px">+ Add Field</div>
<div class="rels" style="top:390.35px;height:124.00px">
<div class="rtitle">RELATIONSHIPS</div>
<div class="ritem" style="top:31.20px"><span class="rbadge">1:N</span><span class="rsrc">publishers</span><svg class="ic arr" viewBox="0 0 24 24"><path d="M5 12h14"/><path d="m12 5 7 7-7 7"/></svg><span class="rdst">author_publishers</span><span class="rgear"><svg class="ic gear" viewBox="0 0 24 24"><circle cx="12" cy="12" r="3"/><path d="M8.86 4.42 L9.88 4.08 L10.18 1.15 L13.82 1.15 L14.12 4.08 L15.14 4.42 L16.10 4.90 L18.39 3.04 L20.96 5.61 L19.10 7.90 L19.58 8.86 L19.92 9.88 L22.85 10.18 L22.85 13.82 L19.92 14.12 L19.58 15.14 L19.10 16.10 L20.96 18.39 L18.39 20.96 L16.10 19.10 L15.14 19.58 L14.12 19.92 L13.82 22.85 L10.18 22.85 L9.88 19.92 L8.86 19.58 L7.90 19.10 L5.61 20.96 L3.04 18.39 L4.90 16.10 L4.42 15.14 L4.08 14.12 L1.15 13.82 L1.15 10.18 L4.08 9.88 L4.42 8.86 L4.90 7.90 L3.04 5.61 L5.61 3.04 L7.90 4.90Z"/></svg></span><span class="rx"><svg class="ic x" viewBox="0 0 24 24"><path d="M18 6 6 18M6 6l12 12"/></svg></span></div>
<div class="handle hp" style="top:44.10px;left:505.5px"></div>
<div class="ritem" style="top:73.30px"><span class="rbadge">1:N</span><span class="rsrc">publishers</span><svg class="ic arr" viewBox="0 0 24 24"><path d="M5 12h14"/><path d="m12 5 7 7-7 7"/></svg><span class="rdst">books</span><span class="rgear"><svg class="ic gear" viewBox="0 0 24 24"><circle cx="12" cy="12" r="3"/><path d="M8.86 4.42 L9.88 4.08 L10.18 1.15 L13.82 1.15 L14.12 4.08 L15.14 4.42 L16.10 4.90 L18.39 3.04 L20.96 5.61 L19.10 7.90 L19.58 8.86 L19.92 9.88 L22.85 10.18 L22.85 13.82 L19.92 14.12 L19.58 15.14 L19.10 16.10 L20.96 18.39 L18.39 20.96 L16.10 19.10 L15.14 19.58 L14.12 19.92 L13.82 22.85 L10.18 22.85 L9.88 19.92 L8.86 19.58 L7.90 19.10 L5.61 20.96 L3.04 18.39 L4.90 16.10 L4.42 15.14 L4.08 14.12 L1.15 13.82 L1.15 10.18 L4.08 9.88 L4.42 8.86 L4.90 7.90 L3.04 5.61 L5.61 3.04 L7.90 4.90Z"/></svg></span><span class="rx"><svg class="ic x" viewBox="0 0 24 24"><path d="M18 6 6 18M6 6l12 12"/></svg></span></div>
<div class="handle hp" style="top:86.20px;left:505.5px"></div>
</div>
<div class="foot ftl" style="top:513.35px"><div class="addr">+ Add Relationship</div><div class="pill">6 fields</div></div>
</div>
<div class="tbl" style="left:684.9px;top:271.9px;height:312.20px">
<div class="hdr">
<div class="homeb"><svg class="ic home" viewBox="0 0 24 24"><path d="m3 9 9-7 9 7v11a2 2 0 0 1-2 2H5a2 2 0 0 1-2-2z"/><path d="M9 22V12h6v10"/></svg></div>
<div class="name">author_publishers</div>
<div class="hbtn" style="left:423px"><svg class="ic plus" viewBox="0 0 24 24"><path d="M5 12h14M12 5v14"/></svg></div>
<div class="hbtn" style="left:468px"><svg class="ic trash" viewBox="0 0 24 24"><path d="M3 6h18"/><path d="M19 6v14c0 1-1 2-2 2H7c-1 0-2-1-2-2V6"/><path d="M8 6V4c0-1 1-2 2-2h4c1 0 2 1 2 2v2"/></svg></div>
</div>
<div class="colh"><span class="ct" style="left:42.9px;width:12px;text-align:center">PK</span><span class="ct" style="left:78.1px;width:12px;text-align:center">UQ</span><span class="ct" style="left:132.5px">FIELD NAME</span><span class="ct" style="left:245px">TYPE</span><span class="ct" style="left:316px">DATA GENERATOR</span><span class="cg" style="left:444.3px"><svg class="ic gear" viewBox="0 0 24 24"><circle cx="12" cy="12" r="3"/><path d="M8.86 4.42 L9.88 4.08 L10.18 1.15 L13.82 1.15 L14.12 4.08 L15.14 4.42 L16.10 4.90 L18.39 3.04 L20.96 5.61 L19.10 7.90 L19.58 8.86 L19.92 9.88 L22.85 10.18 L22.85 13.82 L19.92 14.12 L19.58 15.14 L19.10 16.10 L20.96 18.39 L18.39 20.96 L16.10 19.10 L15.14 19.58 L14.12 19.92 L13.82 22.85 L10.18 22.85 L9.88 19.92 L8.86 19.58 L7.90 19.10 L5.61 20.96 L3.04 18.39 L4.90 16.10 L4.42 15.14 L4.08 14.12 L1.15 13.82 L1.15 10.18 L4.08 9.88 L4.42 8.86 L4.90 7.90 L3.04 5.61 L5.61 3.04 L7.90 4.90Z"/></svg></span><span class="cx" style="left:476.4px"><svg class="ic x" viewBox="0 0 24 24"><path d="M18 6 6 18M6 6l12 12"/></svg></span></div>
<div class="pkrow" style="top:92.60px"></div>
<div class="handle hg" style="top:108.10px;left:1px"></div>
<div class="row" style="top:94.10px">
<div class="drag"><i></i><i></i><i></i><i></i><i></i><i></i></div>
<div class="circ pk"><svg class="ic key" viewBox="0 0 24 24"><circle cx="7.5" cy="15.5" r="5.5"/><path d="m21 2-9.6 9.6"/><path d="m15.5 7.5 3 3L22 7l-3-3"/></svg></div>
<div class="circ c2"><b></b></div>
<div class="fname">id</div>
<div class="badge"><span>UUID</span></div>
<div class="sel selpk"><span>uuid</span><svg class="ic chev" viewBox="0 0 24 24"><path d="m6 9 6 6 6-6"/></svg></div>
<div class="gbtn"><svg class="ic gear" viewBox="0 0 24 24"><circle cx="12" cy="12" r="3"/><path d="M8.86 4.42 L9.88 4.08 L10.18 1.15 L13.82 1.15 L14.12 4.08 L15.14 4.42 L16.10 4.90 L18.39 3.04 L20.96 5.61 L19.10 7.90 L19.58 8.86 L19.92 9.88 L22.85 10.18 L22.85 13.82 L19.92 14.12 L19.58 15.14 L19.10 16.10 L20.96 18.39 L18.39 20.96 L16.10 19.10 L15.14 19.58 L14.12 19.92 L13.82 22.85 L10.18 22.85 L9.88 19.92 L8.86 19.58 L7.90 19.10 L5.61 20.96 L3.04 18.39 L4.90 16.10 L4.42 15.14 L4.08 14.12 L1.15 13.82 L1.15 10.18 L4.08 9.88 L4.42 8.86 L4.90 7.90 L3.04 5.61 L5.61 3.04 L7.90 4.90Z"/></svg></div>
<div class="xbtn"><svg class="ic x" viewBox="0 0 24 24"><path d="M18 6 6 18M6 6l12 12"/></svg></div>
</div>
<div class="row" style="top:135.55px">
<div class="drag"><i></i><i></i><i></i><i></i><i></i><i></i></div>
<div class="circ c1"><b></b></div>
<div class="circ c2"><b></b></div>
<div class="fname">author_id</div>
<div class="badge"><span>UUID</span></div>
<div class="sel"><span>uuid</span><svg class="ic chev" viewBox="0 0 24 24"><path d="m6 9 6 6 6-6"/></svg></div>
<div class="gbtn"><svg class="ic gear" viewBox="0 0 24 24"><circle cx="12" cy="12" r="3"/><path d="M8.86 4.42 L9.88 4.08 L10.18 1.15 L13.82 1.15 L14.12 4.08 L15.14 4.42 L16.10 4.90 L18.39 3.04 L20.96 5.61 L19.10 7.90 L19.58 8.86 L19.92 9.88 L22.85 10.18 L22.85 13.82 L19.92 14.12 L19.58 15.14 L19.10 16.10 L20.96 18.39 L18.39 20.96 L16.10 19.10 L15.14 19.58 L14.12 19.92 L13.82 22.85 L10.18 22.85 L9.88 19.92 L8.86 19.58 L7.90 19.10 L5.61 20.96 L3.04 18.39 L4.90 16.10 L4.42 15.14 L4.08 14.12 L1.15 13.82 L1.15 10.18 L4.08 9.88 L4.42 8.86 L4.90 7.90 L3.04 5.61 L5.61 3.04 L7.90 4.90Z"/></svg></div>
<div class="xbtn"><svg class="ic x" viewBox="0 0 24 24"><path d="M18 6 6 18M6 6l12 12"/></svg></div>
</div>
<div class="row" style="top:177.00px">
<div class="drag"><i></i><i></i><i></i><i></i><i></i><i></i></div>
<div class="circ c1"><b></b></div>
<div class="circ c2"><b></b></div>
<div class="fname">publisher_id</div>
<div class="badge"><span>UUID</span></div>
<div class="sel"><span>uuid</span><svg class="ic chev" viewBox="0 0 24 24"><path d="m6 9 6 6 6-6"/></svg></div>
<div class="gbtn"><svg class="ic gear" viewBox="0 0 24 24"><circle cx="12" cy="12" r="3"/><path d="M8.86 4.42 L9.88 4.08 L10.18 1.15 L13.82 1.15 L14.12 4.08 L15.14 4.42 L16.10 4.90 L18.39 3.04 L20.96 5.61 L19.10 7.90 L19.58 8.86 L19.92 9.88 L22.85 10.18 L22.85 13.82 L19.92 14.12 L19.58 15.14 L19.10 16.10 L20.96 18.39 L18.39 20.96 L16.10 19.10 L15.14 19.58 L14.12 19.92 L13.82 22.85 L10.18 22.85 L9.88 19.92 L8.86 19.58 L7.90 19.10 L5.61 20.96 L3.04 18.39 L4.90 16.10 L4.42 15.14 L4.08 14.12 L1.15 13.82 L1.15 10.18 L4.08 9.88 L4.42 8.86 L4.90 7.90 L3.04 5.61 L5.61 3.04 L7.90 4.90Z"/></svg></div>
<div class="xbtn"><svg class="ic x" viewBox="0 0 24 24"><path d="M18 6 6 18M6 6l12 12"/></svg></div>
</div>
<div class="addf" style="top:229.00px">+ Add Field</div>
<div class="foot" style="top:266.00px"><div class="addr">+ Add Relationship</div><div class="pill">3 fields</div></div>
</div>
<div class="tbl" style="left:1356px;top:-76.8px;height:312.20px">
<div class="hdr">
<div class="homeb"><svg class="ic home" viewBox="0 0 24 24"><path d="m3 9 9-7 9 7v11a2 2 0 0 1-2 2H5a2 2 0 0 1-2-2z"/><path d="M9 22V12h6v10"/></svg></div>
<div class="name">book_authors</div>
<div class="hbtn" style="left:423px"><svg class="ic plus" viewBox="0 0 24 24"><path d="M5 12h14M12 5v14"/></svg></div>
<div class="hbtn" style="left:468px"><svg class="ic trash" viewBox="0 0 24 24"><path d="M3 6h18"/><path d="M19 6v14c0 1-1 2-2 2H7c-1 0-2-1-2-2V6"/><path d="M8 6V4c0-1 1-2 2-2h4c1 0 2 1 2 2v2"/></svg></div>
</div>
<div class="colh"><span class="ct" style="left:42.9px;width:12px;text-align:center">PK</span><span class="ct" style="left:78.1px;width:12px;text-align:center">UQ</span><span class="ct" style="left:132.5px">FIELD NAME</span><span class="ct" style="left:245px">TYPE</span><span class="ct" style="left:316px">DATA GENERATOR</span><span class="cg" style="left:444.3px"><svg class="ic gear" viewBox="0 0 24 24"><circle cx="12" cy="12" r="3"/><path d="M8.86 4.42 L9.88 4.08 L10.18 1.15 L13.82 1.15 L14.12 4.08 L15.14 4.42 L16.10 4.90 L18.39 3.04 L20.96 5.61 L19.10 7.90 L19.58 8.86 L19.92 9.88 L22.85 10.18 L22.85 13.82 L19.92 14.12 L19.58 15.14 L19.10 16.10 L20.96 18.39 L18.39 20.96 L16.10 19.10 L15.14 19.58 L14.12 19.92 L13.82 22.85 L10.18 22.85 L9.88 19.92 L8.86 19.58 L7.90 19.10 L5.61 20.96 L3.04 18.39 L4.90 16.10 L4.42 15.14 L4.08 14.12 L1.15 13.82 L1.15 10.18 L4.08 9.88 L4.42 8.86 L4.90 7.90 L3.04 5.61 L5.61 3.04 L7.90 4.90Z"/></svg></span><span class="cx" style="left:476.4px"><svg class="ic x" viewBox="0 0 24 24"><path d="M18 6 6 18M6 6l12 12"/></svg></span></div>
<div class="pkrow" style="top:92.60px"></div>
<div class="handle hg" style="top:108.10px;left:1px"></div>
<div class="row" style="top:94.10px">
<div class="drag"><i></i><i></i><i></i><i></i><i></i><i></i></div>
<div class="circ pk"><svg class="ic key" viewBox="0 0 24 24"><circle cx="7.5" cy="15.5" r="5.5"/><path d="m21 2-9.6 9.6"/><path d="m15.5 7.5 3 3L22 7l-3-3"/></svg></div>
<div class="circ c2"><b></b></div>
<div class="fname">id</div>
<div class="badge"><span>UUID</span></div>
<div class="sel selpk"><span>uuid</span><svg class="ic chev" viewBox="0 0 24 24"><path d="m6 9 6 6 6-6"/></svg></div>
<div class="gbtn"><svg class="ic gear" viewBox="0 0 24 24"><circle cx="12" cy="12" r="3"/><path d="M8.86 4.42 L9.88 4.08 L10.18 1.15 L13.82 1.15 L14.12 4.08 L15.14 4.42 L16.10 4.90 L18.39 3.04 L20.96 5.61 L19.10 7.90 L19.58 8.86 L19.92 9.88 L22.85 10.18 L22.85 13.82 L19.92 14.12 L19.58 15.14 L19.10 16.10 L20.96 18.39 L18.39 20.96 L16.10 19.10 L15.14 19.58 L14.12 19.92 L13.82 22.85 L10.18 22.85 L9.88 19.92 L8.86 19.58 L7.90 19.10 L5.61 20.96 L3.04 18.39 L4.90 16.10 L4.42 15.14 L4.08 14.12 L1.15 13.82 L1.15 10.18 L4.08 9.88 L4.42 8.86 L4.90 7.90 L3.04 5.61 L5.61 3.04 L7.90 4.90Z"/></svg></div>
<div class="xbtn"><svg class="ic x" viewBox="0 0 24 24"><path d="M18 6 6 18M6 6l12 12"/></svg></div>
</div>
<div class="row" style="top:135.55px">
<div class="drag"><i></i><i></i><i></i><i></i><i></i><i></i></div>
<div class="circ c1"><b></b></div>
<div class="circ c2"><b></b></div>
<div class="fname">book_id</div>
<div class="badge"><span>UUID</span></div>
<div class="sel"><span>uuid</span><svg class="ic chev" viewBox="0 0 24 24"><path d="m6 9 6 6 6-6"/></svg></div>
<div class="gbtn"><svg class="ic gear" viewBox="0 0 24 24"><circle cx="12" cy="12" r="3"/><path d="M8.86 4.42 L9.88 4.08 L10.18 1.15 L13.82 1.15 L14.12 4.08 L15.14 4.42 L16.10 4.90 L18.39 3.04 L20.96 5.61 L19.10 7.90 L19.58 8.86 L19.92 9.88 L22.85 10.18 L22.85 13.82 L19.92 14.12 L19.58 15.14 L19.10 16.10 L20.96 18.39 L18.39 20.96 L16.10 19.10 L15.14 19.58 L14.12 19.92 L13.82 22.85 L10.18 22.85 L9.88 19.92 L8.86 19.58 L7.90 19.10 L5.61 20.96 L3.04 18.39 L4.90 16.10 L4.42 15.14 L4.08 14.12 L1.15 13.82 L1.15 10.18 L4.08 9.88 L4.42 8.86 L4.90 7.90 L3.04 5.61 L5.61 3.04 L7.90 4.90Z"/></svg></div>
<div class="xbtn"><svg class="ic x" viewBox="0 0 24 24"><path d="M18 6 6 18M6 6l12 12"/></svg></div>
</div>
<div class="row" style="top:177.00px">
<div class="drag"><i></i><i></i><i></i><i></i><i></i><i></i></div>
<div class="circ c1"><b></b></div>
<div class="circ c2"><b></b></div>
<div class="fname">author_id</div>
<div class="badge"><span>UUID</span></div>
<div class="sel"><span>uuid</span><svg class="ic chev" viewBox="0 0 24 24"><path d="m6 9 6 6 6-6"/></svg></div>
<div class="gbtn"><svg class="ic gear" viewBox="0 0 24 24"><circle cx="12" cy="12" r="3"/><path d="M8.86 4.42 L9.88 4.08 L10.18 1.15 L13.82 1.15 L14.12 4.08 L15.14 4.42 L16.10 4.90 L18.39 3.04 L20.96 5.61 L19.10 7.90 L19.58 8.86 L19.92 9.88 L22.85 10.18 L22.85 13.82 L19.92 14.12 L19.58 15.14 L19.10 16.10 L20.96 18.39 L18.39 20.96 L16.10 19.10 L15.14 19.58 L14.12 19.92 L13.82 22.85 L10.18 22.85 L9.88 19.92 L8.86 19.58 L7.90 19.10 L5.61 20.96 L3.04 18.39 L4.90 16.10 L4.42 15.14 L4.08 14.12 L1.15 13.82 L1.15 10.18 L4.08 9.88 L4.42 8.86 L4.90 7.90 L3.04 5.61 L5.61 3.04 L7.90 4.90Z"/></svg></div>
<div class="xbtn"><svg class="ic x" viewBox="0 0 24 24"><path d="M18 6 6 18M6 6l12 12"/></svg></div>
</div>
<div class="addf" style="top:229.00px">+ Add Field</div>
<div class="foot" style="top:266.00px"><div class="addr">+ Add Relationship</div><div class="pill">3 fields</div></div>
</div>
<div class="tbl root" style="left:667.2px;top:720.7px;height:683.90px">
<div class="hdr">
<div class="rootb">ROOT</div>
<div class="name" style="left:69.9px;width:346.5px">books</div>
<div class="hbtn" style="left:423px"><svg class="ic plus" viewBox="0 0 24 24"><path d="M5 12h14M12 5v14"/></svg></div>
<div class="hbtn" style="left:468px"><svg class="ic trash" viewBox="0 0 24 24"><path d="M3 6h18"/><path d="M19 6v14c0 1-1 2-2 2H7c-1 0-2-1-2-2V6"/><path d="M8 6V4c0-1 1-2 2-2h4c1 0 2 1 2 2v2"/></svg></div>
</div>
<div class="colh"><span class="ct" style="left:42.9px;width:12px;text-align:center">PK</span><span class="ct" style="left:78.1px;width:12px;text-align:center">UQ</span><span class="ct" style="left:132.5px">FIELD NAME</span><span class="ct" style="left:245px">TYPE</span><span class="ct" style="left:316px">DATA GENERATOR</span><span class="cg" style="left:444.3px"><svg class="ic gear" viewBox="0 0 24 24"><circle cx="12" cy="12" r="3"/><path d="M8.86 4.42 L9.88 4.08 L10.18 1.15 L13.82 1.15 L14.12 4.08 L15.14 4.42 L16.10 4.90 L18.39 3.04 L20.96 5.61 L19.10 7.90 L19.58 8.86 L19.92 9.88 L22.85 10.18 L22.85 13.82 L19.92 14.12 L19.58 15.14 L19.10 16.10 L20.96 18.39 L18.39 20.96 L16.10 19.10 L15.14 19.58 L14.12 19.92 L13.82 22.85 L10.18 22.85 L9.88 19.92 L8.86 19.58 L7.90 19.10 L5.61 20.96 L3.04 18.39 L4.90 16.10 L4.42 15.14 L4.08 14.12 L1.15 13.82 L1.15 10.18 L4.08 9.88 L4.42 8.86 L4.90 7.90 L3.04 5.61 L5.61 3.04 L7.90 4.90Z"/></svg></span><span class="cx" style="left:476.4px"><svg class="ic x" viewBox="0 0 24 24"><path d="M18 6 6 18M6 6l12 12"/></svg></span></div>
<div class="pkrow" style="top:92.60px"></div>
<div class="handle hg" style="top:108.10px;left:1px"></div>
<div class="row" style="top:94.10px">
<div class="drag"><i></i><i></i><i></i><i></i><i></i><i></i></div>
<div class="circ pk"><svg class="ic key" viewBox="0 0 24 24"><circle cx="7.5" cy="15.5" r="5.5"/><path d="m21 2-9.6 9.6"/><path d="m15.5 7.5 3 3L22 7l-3-3"/></svg></div>
<div class="circ c2"><b></b></div>
<div class="fname">id</div>
<div class="badge"><span>UUID</span></div>
<div class="sel selpk"><span>uuid</span><svg class="ic chev" viewBox="0 0 24 24"><path d="m6 9 6 6 6-6"/></svg></div>
<div class="gbtn"><svg class="ic gear" viewBox="0 0 24 24"><circle cx="12" cy="12" r="3"/><path d="M8.86 4.42 L9.88 4.08 L10.18 1.15 L13.82 1.15 L14.12 4.08 L15.14 4.42 L16.10 4.90 L18.39 3.04 L20.96 5.61 L19.10 7.90 L19.58 8.86 L19.92 9.88 L22.85 10.18 L22.85 13.82 L19.92 14.12 L19.58 15.14 L19.10 16.10 L20.96 18.39 L18.39 20.96 L16.10 19.10 L15.14 19.58 L14.12 19.92 L13.82 22.85 L10.18 22.85 L9.88 19.92 L8.86 19.58 L7.90 19.10 L5.61 20.96 L3.04 18.39 L4.90 16.10 L4.42 15.14 L4.08 14.12 L1.15 13.82 L1.15 10.18 L4.08 9.88 L4.42 8.86 L4.90 7.90 L3.04 5.61 L5.61 3.04 L7.90 4.90Z"/></svg></div>
<div class="xbtn"><svg class="ic x" viewBox="0 0 24 24"><path d="M18 6 6 18M6 6l12 12"/></svg></div>
</div>
<div class="row" style="top:135.55px">
<div class="drag"><i></i><i></i><i></i><i></i><i></i><i></i></div>
<div class="circ c1"><b></b></div>
<div class="circ c2"><b></b></div>
<div class="fname">isbn</div>
<div class="badge"><span>STR</span></div>
<div class="sel"><span>isbn13</span><svg class="ic chev" viewBox="0 0 24 24"><path d="m6 9 6 6 6-6"/></svg></div>
<div class="gbtn"><svg class="ic gear" viewBox="0 0 24 24"><circle cx="12" cy="12" r="3"/><path d="M8.86 4.42 L9.88 4.08 L10.18 1.15 L13.82 1.15 L14.12 4.08 L15.14 4.42 L16.10 4.90 L18.39 3.04 L20.96 5.61 L19.10 7.90 L19.58 8.86 L19.92 9.88 L22.85 10.18 L22.85 13.82 L19.92 14.12 L19.58 15.14 L19.10 16.10 L20.96 18.39 L18.39 20.96 L16.10 19.10 L15.14 19.58 L14.12 19.92 L13.82 22.85 L10.18 22.85 L9.88 19.92 L8.86 19.58 L7.90 19.10 L5.61 20.96 L3.04 18.39 L4.90 16.10 L4.42 15.14 L4.08 14.12 L1.15 13.82 L1.15 10.18 L4.08 9.88 L4.42 8.86 L4.90 7.90 L3.04 5.61 L5.61 3.04 L7.90 4.90Z"/></svg></div>
<div class="xbtn"><svg class="ic x" viewBox="0 0 24 24"><path d="M18 6 6 18M6 6l12 12"/></svg></div>
</div>
<div class="row" style="top:177.00px">
<div class="drag"><i></i><i></i><i></i><i></i><i></i><i></i></div>
<div class="circ c1"><b></b></div>
<div class="circ c2"><b></b></div>
<div class="fname">title</div>
<div class="badge"><span>STR</span></div>
<div class="sel"><span>book_title</span><svg class="ic chev" viewBox="0 0 24 24"><path d="m6 9 6 6 6-6"/></svg></div>
<div class="gbtn"><svg class="ic gear" viewBox="0 0 24 24"><circle cx="12" cy="12" r="3"/><path d="M8.86 4.42 L9.88 4.08 L10.18 1.15 L13.82 1.15 L14.12 4.08 L15.14 4.42 L16.10 4.90 L18.39 3.04 L20.96 5.61 L19.10 7.90 L19.58 8.86 L19.92 9.88 L22.85 10.18 L22.85 13.82 L19.92 14.12 L19.58 15.14 L19.10 16.10 L20.96 18.39 L18.39 20.96 L16.10 19.10 L15.14 19.58 L14.12 19.92 L13.82 22.85 L10.18 22.85 L9.88 19.92 L8.86 19.58 L7.90 19.10 L5.61 20.96 L3.04 18.39 L4.90 16.10 L4.42 15.14 L4.08 14.12 L1.15 13.82 L1.15 10.18 L4.08 9.88 L4.42 8.86 L4.90 7.90 L3.04 5.61 L5.61 3.04 L7.90 4.90Z"/></svg></div>
<div class="xbtn"><svg class="ic x" viewBox="0 0 24 24"><path d="M18 6 6 18M6 6l12 12"/></svg></div>
</div>
<div class="row" style="top:218.45px">
<div class="drag"><i></i><i></i><i></i><i></i><i></i><i></i></div>
<div class="circ c1"><b></b></div>
<div class="circ c2"><b></b></div>
<div class="fname">publication_date</div>
<div class="badge"><span>DATE</span></div>
<div class="sel"><span>date</span><svg class="ic chev" viewBox="0 0 24 24"><path d="m6 9 6 6 6-6"/></svg></div>
<div class="gbtn hl"><svg class="ic gear" viewBox="0 0 24 24"><circle cx="12" cy="12" r="3"/><path d="M8.86 4.42 L9.88 4.08 L10.18 1.15 L13.82 1.15 L14.12 4.08 L15.14 4.42 L16.10 4.90 L18.39 3.04 L20.96 5.61 L19.10 7.90 L19.58 8.86 L19.92 9.88 L22.85 10.18 L22.85 13.82 L19.92 14.12 L19.58 15.14 L19.10 16.10 L20.96 18.39 L18.39 20.96 L16.10 19.10 L15.14 19.58 L14.12 19.92 L13.82 22.85 L10.18 22.85 L9.88 19.92 L8.86 19.58 L7.90 19.10 L5.61 20.96 L3.04 18.39 L4.90 16.10 L4.42 15.14 L4.08 14.12 L1.15 13.82 L1.15 10.18 L4.08 9.88 L4.42 8.86 L4.90 7.90 L3.04 5.61 L5.61 3.04 L7.90 4.90Z"/></svg></div>
<div class="xbtn"><svg class="ic x" viewBox="0 0 24 24"><path d="M18 6 6 18M6 6l12 12"/></svg></div>
</div>
<div class="row" style="top:259.90px">
<div class="drag"><i></i><i></i><i></i><i></i><i></i><i></i></div>
<div class="circ c1"><b></b></div>
<div class="circ c2"><b></b></div>
<div class="fname">page_count</div>
<div class="badge"><span>INT</span></div>
<div class="sel"><span>integer</span><svg class="ic chev" viewBox="0 0 24 24"><path d="m6 9 6 6 6-6"/></svg></div>
<div class="gbtn hl"><svg class="ic gear" viewBox="0 0 24 24"><circle cx="12" cy="12" r="3"/><path d="M8.86 4.42 L9.88 4.08 L10.18 1.15 L13.82 1.15 L14.12 4.08 L15.14 4.42 L16.10 4.90 L18.39 3.04 L20.96 5.61 L19.10 7.90 L19.58 8.86 L19.92 9.88 L22.85 10.18 L22.85 13.82 L19.92 14.12 L19.58 15.14 L19.10 16.10 L20.96 18.39 L18.39 20.96 L16.10 19.10 L15.14 19.58 L14.12 19.92 L13.82 22.85 L10.18 22.85 L9.88 19.92 L8.86 19.58 L7.90 19.10 L5.61 20.96 L3.04 18.39 L4.90 16.10 L4.42 15.14 L4.08 14.12 L1.15 13.82 L1.15 10.18 L4.08 9.88 L4.42 8.86 L4.90 7.90 L3.04 5.61 L5.61 3.04 L7.90 4.90Z"/></svg></div>
<div class="xbtn"><svg class="ic x" viewBox="0 0 24 24"><path d="M18 6 6 18M6 6l12 12"/></svg></div>
</div>
<div class="row" style="top:301.35px">
<div class="drag"><i></i><i></i><i></i><i></i><i></i><i></i></div>
<div class="circ c1"><b></b></div>
<div class="circ c2"><b></b></div>
<div class="fname">genre</div>
<div class="badge"><span>STR</span></div>
<div class="sel"><span>text</span><svg class="ic chev" viewBox="0 0 24 24"><path d="m6 9 6 6 6-6"/></svg></div>
<div class="gbtn hl"><svg class="ic gear" viewBox="0 0 24 24"><circle cx="12" cy="12" r="3"/><path d="M8.86 4.42 L9.88 4.08 L10.18 1.15 L13.82 1.15 L14.12 4.08 L15.14 4.42 L16.10 4.90 L18.39 3.04 L20.96 5.61 L19.10 7.90 L19.58 8.86 L19.92 9.88 L22.85 10.18 L22.85 13.82 L19.92 14.12 L19.58 15.14 L19.10 16.10 L20.96 18.39 L18.39 20.96 L16.10 19.10 L15.14 19.58 L14.12 19.92 L13.82 22.85 L10.18 22.85 L9.88 19.92 L8.86 19.58 L7.90 19.10 L5.61 20.96 L3.04 18.39 L4.90 16.10 L4.42 15.14 L4.08 14.12 L1.15 13.82 L1.15 10.18 L4.08 9.88 L4.42 8.86 L4.90 7.90 L3.04 5.61 L5.61 3.04 L7.90 4.90Z"/></svg></div>
<div class="xbtn"><svg class="ic x" viewBox="0 0 24 24"><path d="M18 6 6 18M6 6l12 12"/></svg></div>
</div>
<div class="row" style="top:342.80px">
<div class="drag"><i></i><i></i><i></i><i></i><i></i><i></i></div>
<div class="circ c1"><b></b></div>
<div class="circ c2"><b></b></div>
<div class="fname">language</div>
<div class="badge"><span>STR</span></div>
<div class="sel"><span>text</span><svg class="ic chev" viewBox="0 0 24 24"><path d="m6 9 6 6 6-6"/></svg></div>
<div class="gbtn hl"><svg class="ic gear" viewBox="0 0 24 24"><circle cx="12" cy="12" r="3"/><path d="M8.86 4.42 L9.88 4.08 L10.18 1.15 L13.82 1.15 L14.12 4.08 L15.14 4.42 L16.10 4.90 L18.39 3.04 L20.96 5.61 L19.10 7.90 L19.58 8.86 L19.92 9.88 L22.85 10.18 L22.85 13.82 L19.92 14.12 L19.58 15.14 L19.10 16.10 L20.96 18.39 L18.39 20.96 L16.10 19.10 L15.14 19.58 L14.12 19.92 L13.82 22.85 L10.18 22.85 L9.88 19.92 L8.86 19.58 L7.90 19.10 L5.61 20.96 L3.04 18.39 L4.90 16.10 L4.42 15.14 L4.08 14.12 L1.15 13.82 L1.15 10.18 L4.08 9.88 L4.42 8.86 L4.90 7.90 L3.04 5.61 L5.61 3.04 L7.90 4.90Z"/></svg></div>
<div class="xbtn"><svg class="ic x" viewBox="0 0 24 24"><path d="M18 6 6 18M6 6l12 12"/></svg></div>
</div>
<div class="row" style="top:384.25px">
<div class="drag"><i></i><i></i><i></i><i></i><i></i><i></i></div>
<div class="circ c1"><b></b></div>
<div class="circ c2"><b></b></div>
<div class="fname">list_price</div>
<div class="badge"><span>DEC</span></div>
<div class="sel"><span>price</span><svg class="ic chev" viewBox="0 0 24 24"><path d="m6 9 6 6 6-6"/></svg></div>
<div class="gbtn hl"><svg class="ic gear" viewBox="0 0 24 24"><circle cx="12" cy="12" r="3"/><path d="M8.86 4.42 L9.88 4.08 L10.18 1.15 L13.82 1.15 L14.12 4.08 L15.14 4.42 L16.10 4.90 L18.39 3.04 L20.96 5.61 L19.10 7.90 L19.58 8.86 L19.92 9.88 L22.85 10.18 L22.85 13.82 L19.92 14.12 L19.58 15.14 L19.10 16.10 L20.96 18.39 L18.39 20.96 L16.10 19.10 L15.14 19.58 L14.12 19.92 L13.82 22.85 L10.18 22.85 L9.88 19.92 L8.86 19.58 L7.90 19.10 L5.61 20.96 L3.04 18.39 L4.90 16.10 L4.42 15.14 L4.08 14.12 L1.15 13.82 L1.15 10.18 L4.08 9.88 L4.42 8.86 L4.90 7.90 L3.04 5.61 L5.61 3.04 L7.90 4.90Z"/></svg></div>
<div class="xbtn"><svg class="ic x" viewBox="0 0 24 24"><path d="M18 6 6 18M6 6l12 12"/></svg></div>
</div>
<div class="row" style="top:425.70px">
<div class="drag"><i></i><i></i><i></i><i></i><i></i><i></i></div>
<div class="circ c1"><b></b></div>
<div class="circ c2"><b></b></div>
<div class="fname">publisher_id</div>
<div class="badge"><span>UUID</span></div>
<div class="sel"><span>uuid</span><svg class="ic chev" viewBox="0 0 24 24"><path d="m6 9 6 6 6-6"/></svg></div>
<div class="gbtn"><svg class="ic gear" viewBox="0 0 24 24"><circle cx="12" cy="12" r="3"/><path d="M8.86 4.42 L9.88 4.08 L10.18 1.15 L13.82 1.15 L14.12 4.08 L15.14 4.42 L16.10 4.90 L18.39 3.04 L20.96 5.61 L19.10 7.90 L19.58 8.86 L19.92 9.88 L22.85 10.18 L22.85 13.82 L19.92 14.12 L19.58 15.14 L19.10 16.10 L20.96 18.39 L18.39 20.96 L16.10 19.10 L15.14 19.58 L14.12 19.92 L13.82 22.85 L10.18 22.85 L9.88 19.92 L8.86 19.58 L7.90 19.10 L5.61 20.96 L3.04 18.39 L4.90 16.10 L4.42 15.14 L4.08 14.12 L1.15 13.82 L1.15 10.18 L4.08 9.88 L4.42 8.86 L4.90 7.90 L3.04 5.61 L5.61 3.04 L7.90 4.90Z"/></svg></div>
<div class="xbtn"><svg class="ic x" viewBox="0 0 24 24"><path d="M18 6 6 18M6 6l12 12"/></svg></div>
</div>
<div class="addf" style="top:477.70px">+ Add Field</div>
<div class="rels" style="top:514.70px;height:124.00px">
<div class="rtitle">RELATIONSHIPS</div>
<div class="ritem" style="top:31.20px"><span class="rbadge">1:N</span><span class="rsrc">books</span><svg class="ic arr" viewBox="0 0 24 24"><path d="M5 12h14"/><path d="m12 5 7 7-7 7"/></svg><span class="rdst">book_authors</span><span class="rgear"><svg class="ic gear" viewBox="0 0 24 24"><circle cx="12" cy="12" r="3"/><path d="M8.86 4.42 L9.88 4.08 L10.18 1.15 L13.82 1.15 L14.12 4.08 L15.14 4.42 L16.10 4.90 L18.39 3.04 L20.96 5.61 L19.10 7.90 L19.58 8.86 L19.92 9.88 L22.85 10.18 L22.85 13.82 L19.92 14.12 L19.58 15.14 L19.10 16.10 L20.96 18.39 L18.39 20.96 L16.10 19.10 L15.14 19.58 L14.12 19.92 L13.82 22.85 L10.18 22.85 L9.88 19.92 L8.86 19.58 L7.90 19.10 L5.61 20.96 L3.04 18.39 L4.90 16.10 L4.42 15.14 L4.08 14.12 L1.15 13.82 L1.15 10.18 L4.08 9.88 L4.42 8.86 L4.90 7.90 L3.04 5.61 L5.61 3.04 L7.90 4.90Z"/></svg></span><span class="rx"><svg class="ic x" viewBox="0 0 24 24"><path d="M18 6 6 18M6 6l12 12"/></svg></span></div>
<div class="handle hp" style="top:44.10px;left:505.5px"></div>
<div class="ritem" style="top:73.30px"><span class="rbadge">1:N</span><span class="rsrc">books</span><svg class="ic arr" viewBox="0 0 24 24"><path d="M5 12h14"/><path d="m12 5 7 7-7 7"/></svg><span class="rdst">book_editions</span><span class="rgear"><svg class="ic gear" viewBox="0 0 24 24"><circle cx="12" cy="12" r="3"/><path d="M8.86 4.42 L9.88 4.08 L10.18 1.15 L13.82 1.15 L14.12 4.08 L15.14 4.42 L16.10 4.90 L18.39 3.04 L20.96 5.61 L19.10 7.90 L19.58 8.86 L19.92 9.88 L22.85 10.18 L22.85 13.82 L19.92 14.12 L19.58 15.14 L19.10 16.10 L20.96 18.39 L18.39 20.96 L16.10 19.10 L15.14 19.58 L14.12 19.92 L13.82 22.85 L10.18 22.85 L9.88 19.92 L8.86 19.58 L7.90 19.10 L5.61 20.96 L3.04 18.39 L4.90 16.10 L4.42 15.14 L4.08 14.12 L1.15 13.82 L1.15 10.18 L4.08 9.88 L4.42 8.86 L4.90 7.90 L3.04 5.61 L5.61 3.04 L7.90 4.90Z"/></svg></span><span class="rx"><svg class="ic x" viewBox="0 0 24 24"><path d="M18 6 6 18M6 6l12 12"/></svg></span></div>
<div class="handle hp" style="top:86.20px;left:505.5px"></div>
</div>
<div class="foot ftl" style="top:637.70px"><div class="addr">+ Add Relationship</div><div class="pill">9 fields</div></div>
</div>
<div class="tbl" style="left:1409.8px;top:705.4px;height:436.55px">
<div class="hdr">
<div class="homeb"><svg class="ic home" viewBox="0 0 24 24"><path d="m3 9 9-7 9 7v11a2 2 0 0 1-2 2H5a2 2 0 0 1-2-2z"/><path d="M9 22V12h6v10"/></svg></div>
<div class="name">book_editions</div>
<div class="hbtn" style="left:423px"><svg class="ic plus" viewBox="0 0 24 24"><path d="M5 12h14M12 5v14"/></svg></div>
<div class="hbtn" style="left:468px"><svg class="ic trash" viewBox="0 0 24 24"><path d="M3 6h18"/><path d="M19 6v14c0 1-1 2-2 2H7c-1 0-2-1-2-2V6"/><path d="M8 6V4c0-1 1-2 2-2h4c1 0 2 1 2 2v2"/></svg></div>
</div>
<div class="colh"><span class="ct" style="left:42.9px;width:12px;text-align:center">PK</span><span class="ct" style="left:78.1px;width:12px;text-align:center">UQ</span><span class="ct" style="left:132.5px">FIELD NAME</span><span class="ct" style="left:245px">TYPE</span><span class="ct" style="left:316px">DATA GENERATOR</span><span class="cg" style="left:444.3px"><svg class="ic gear" viewBox="0 0 24 24"><circle cx="12" cy="12" r="3"/><path d="M8.86 4.42 L9.88 4.08 L10.18 1.15 L13.82 1.15 L14.12 4.08 L15.14 4.42 L16.10 4.90 L18.39 3.04 L20.96 5.61 L19.10 7.90 L19.58 8.86 L19.92 9.88 L22.85 10.18 L22.85 13.82 L19.92 14.12 L19.58 15.14 L19.10 16.10 L20.96 18.39 L18.39 20.96 L16.10 19.10 L15.14 19.58 L14.12 19.92 L13.82 22.85 L10.18 22.85 L9.88 19.92 L8.86 19.58 L7.90 19.10 L5.61 20.96 L3.04 18.39 L4.90 16.10 L4.42 15.14 L4.08 14.12 L1.15 13.82 L1.15 10.18 L4.08 9.88 L4.42 8.86 L4.90 7.90 L3.04 5.61 L5.61 3.04 L7.90 4.90Z"/></svg></span><span class="cx" style="left:476.4px"><svg class="ic x" viewBox="0 0 24 24"><path d="M18 6 6 18M6 6l12 12"/></svg></span></div>
<div class="pkrow" style="top:92.60px"></div>
<div class="handle hg" style="top:108.10px;left:1px"></div>
<div class="row" style="top:94.10px">
<div class="drag"><i></i><i></i><i></i><i></i><i></i><i></i></div>
<div class="circ pk"><svg class="ic key" viewBox="0 0 24 24"><circle cx="7.5" cy="15.5" r="5.5"/><path d="m21 2-9.6 9.6"/><path d="m15.5 7.5 3 3L22 7l-3-3"/></svg></div>
<div class="circ c2"><b></b></div>
<div class="fname">id</div>
<div class="badge"><span>UUID</span></div>
<div class="sel selpk"><span>uuid</span><svg class="ic chev" viewBox="0 0 24 24"><path d="m6 9 6 6 6-6"/></svg></div>
<div class="gbtn"><svg class="ic gear" viewBox="0 0 24 24"><circle cx="12" cy="12" r="3"/><path d="M8.86 4.42 L9.88 4.08 L10.18 1.15 L13.82 1.15 L14.12 4.08 L15.14 4.42 L16.10 4.90 L18.39 3.04 L20.96 5.61 L19.10 7.90 L19.58 8.86 L19.92 9.88 L22.85 10.18 L22.85 13.82 L19.92 14.12 L19.58 15.14 L19.10 16.10 L20.96 18.39 L18.39 20.96 L16.10 19.10 L15.14 19.58 L14.12 19.92 L13.82 22.85 L10.18 22.85 L9.88 19.92 L8.86 19.58 L7.90 19.10 L5.61 20.96 L3.04 18.39 L4.90 16.10 L4.42 15.14 L4.08 14.12 L1.15 13.82 L1.15 10.18 L4.08 9.88 L4.42 8.86 L4.90 7.90 L3.04 5.61 L5.61 3.04 L7.90 4.90Z"/></svg></div>
<div class="xbtn"><svg class="ic x" viewBox="0 0 24 24"><path d="M18 6 6 18M6 6l12 12"/></svg></div>
</div>
<div class="row" style="top:135.55px">
<div class="drag"><i></i><i></i><i></i><i></i><i></i><i></i></div>
<div class="circ c1"><b></b></div>
<div class="circ c2"><b></b></div>
<div class="fname">book_id</div>
<div class="badge"><span>UUID</span></div>
<div class="sel"><span>uuid</span><svg class="ic chev" viewBox="0 0 24 24"><path d="m6 9 6 6 6-6"/></svg></div>
<div class="gbtn"><svg class="ic gear" viewBox="0 0 24 24"><circle cx="12" cy="12" r="3"/><path d="M8.86 4.42 L9.88 4.08 L10.18 1.15 L13.82 1.15 L14.12 4.08 L15.14 4.42 L16.10 4.90 L18.39 3.04 L20.96 5.61 L19.10 7.90 L19.58 8.86 L19.92 9.88 L22.85 10.18 L22.85 13.82 L19.92 14.12 L19.58 15.14 L19.10 16.10 L20.96 18.39 L18.39 20.96 L16.10 19.10 L15.14 19.58 L14.12 19.92 L13.82 22.85 L10.18 22.85 L9.88 19.92 L8.86 19.58 L7.90 19.10 L5.61 20.96 L3.04 18.39 L4.90 16.10 L4.42 15.14 L4.08 14.12 L1.15 13.82 L1.15 10.18 L4.08 9.88 L4.42 8.86 L4.90 7.90 L3.04 5.61 L5.61 3.04 L7.90 4.90Z"/></svg></div>
<div class="xbtn"><svg class="ic x" viewBox="0 0 24 24"><path d="M18 6 6 18M6 6l12 12"/></svg></div>
</div>
<div class="row" style="top:177.00px">
<div class="drag"><i></i><i></i><i></i><i></i><i></i><i></i></div>
<div class="circ c1"><b></b></div>
<div class="circ c2"><b></b></div>
<div class="fname">isbn</div>
<div class="badge"><span>STR</span></div>
<div class="sel"><span>isbn13</span><svg class="ic chev" viewBox="0 0 24 24"><path d="m6 9 6 6 6-6"/></svg></div>
<div class="gbtn"><svg class="ic gear" viewBox="0 0 24 24"><circle cx="12" cy="12" r="3"/><path d="M8.86 4.42 L9.88 4.08 L10.18 1.15 L13.82 1.15 L14.12 4.08 L15.14 4.42 L16.10 4.90 L18.39 3.04 L20.96 5.61 L19.10 7.90 L19.58 8.86 L19.92 9.88 L22.85 10.18 L22.85 13.82 L19.92 14.12 L19.58 15.14 L19.10 16.10 L20.96 18.39 L18.39 20.96 L16.10 19.10 L15.14 19.58 L14.12 19.92 L13.82 22.85 L10.18 22.85 L9.88 19.92 L8.86 19.58 L7.90 19.10 L5.61 20.96 L3.04 18.39 L4.90 16.10 L4.42 15.14 L4.08 14.12 L1.15 13.82 L1.15 10.18 L4.08 9.88 L4.42 8.86 L4.90 7.90 L3.04 5.61 L5.61 3.04 L7.90 4.90Z"/></svg></div>
<div class="xbtn"><svg class="ic x" viewBox="0 0 24 24"><path d="M18 6 6 18M6 6l12 12"/></svg></div>
</div>
<div class="row" style="top:218.45px">
<div class="drag"><i></i><i></i><i></i><i></i><i></i><i></i></div>
<div class="circ c1"><b></b></div>
<div class="circ c2"><b></b></div>
<div class="fname">format</div>
<div class="badge"><span>STR</span></div>
<div class="sel"><span>text</span><svg class="ic chev" viewBox="0 0 24 24"><path d="m6 9 6 6 6-6"/></svg></div>
<div class="gbtn hl"><svg class="ic gear" viewBox="0 0 24 24"><circle cx="12" cy="12" r="3"/><path d="M8.86 4.42 L9.88 4.08 L10.18 1.15 L13.82 1.15 L14.12 4.08 L15.14 4.42 L16.10 4.90 L18.39 3.04 L20.96 5.61 L19.10 7.90 L19.58 8.86 L19.92 9.88 L22.85 10.18 L22.85 13.82 L19.92 14.12 L19.58 15.14 L19.10 16.10 L20.96 18.39 L18.39 20.96 L16.10 19.10 L15.14 19.58 L14.12 19.92 L13.82 22.85 L10.18 22.85 L9.88 19.92 L8.86 19.58 L7.90 19.10 L5.61 20.96 L3.04 18.39 L4.90 16.10 L4.42 15.14 L4.08 14.12 L1.15 13.82 L1.15 10.18 L4.08 9.88 L4.42 8.86 L4.90 7.90 L3.04 5.61 L5.61 3.04 L7.90 4.90Z"/></svg></div>
<div class="xbtn"><svg class="ic x" viewBox="0 0 24 24"><path d="M18 6 6 18M6 6l12 12"/></svg></div>
</div>
<div class="row" style="top:259.90px">
<div class="drag"><i></i><i></i><i></i><i></i><i></i><i></i></div>
<div class="circ c1"><b></b></div>
<div class="circ c2"><b></b></div>
<div class="fname">release_date</div>
<div class="badge"><span>DATE</span></div>
<div class="sel"><span>date</span><svg class="ic chev" viewBox="0 0 24 24"><path d="m6 9 6 6 6-6"/></svg></div>
<div class="gbtn hl"><svg class="ic gear" viewBox="0 0 24 24"><circle cx="12" cy="12" r="3"/><path d="M8.86 4.42 L9.88 4.08 L10.18 1.15 L13.82 1.15 L14.12 4.08 L15.14 4.42 L16.10 4.90 L18.39 3.04 L20.96 5.61 L19.10 7.90 L19.58 8.86 L19.92 9.88 L22.85 10.18 L22.85 13.82 L19.92 14.12 L19.58 15.14 L19.10 16.10 L20.96 18.39 L18.39 20.96 L16.10 19.10 L15.14 19.58 L14.12 19.92 L13.82 22.85 L10.18 22.85 L9.88 19.92 L8.86 19.58 L7.90 19.10 L5.61 20.96 L3.04 18.39 L4.90 16.10 L4.42 15.14 L4.08 14.12 L1.15 13.82 L1.15 10.18 L4.08 9.88 L4.42 8.86 L4.90 7.90 L3.04 5.61 L5.61 3.04 L7.90 4.90Z"/></svg></div>
<div class="xbtn"><svg class="ic x" viewBox="0 0 24 24"><path d="M18 6 6 18M6 6l12 12"/></svg></div>
</div>
<div class="row" style="top:301.35px">
<div class="drag"><i></i><i></i><i></i><i></i><i></i><i></i></div>
<div class="circ c1"><b></b></div>
<div class="circ c2"><b></b></div>
<div class="fname">price</div>
<div class="badge"><span>DEC</span></div>
<div class="sel"><span>price</span><svg class="ic chev" viewBox="0 0 24 24"><path d="m6 9 6 6 6-6"/></svg></div>
<div class="gbtn hl"><svg class="ic gear" viewBox="0 0 24 24"><circle cx="12" cy="12" r="3"/><path d="M8.86 4.42 L9.88 4.08 L10.18 1.15 L13.82 1.15 L14.12 4.08 L15.14 4.42 L16.10 4.90 L18.39 3.04 L20.96 5.61 L19.10 7.90 L19.58 8.86 L19.92 9.88 L22.85 10.18 L22.85 13.82 L19.92 14.12 L19.58 15.14 L19.10 16.10 L20.96 18.39 L18.39 20.96 L16.10 19.10 L15.14 19.58 L14.12 19.92 L13.82 22.85 L10.18 22.85 L9.88 19.92 L8.86 19.58 L7.90 19.10 L5.61 20.96 L3.04 18.39 L4.90 16.10 L4.42 15.14 L4.08 14.12 L1.15 13.82 L1.15 10.18 L4.08 9.88 L4.42 8.86 L4.90 7.90 L3.04 5.61 L5.61 3.04 L7.90 4.90Z"/></svg></div>
<div class="xbtn"><svg class="ic x" viewBox="0 0 24 24"><path d="M18 6 6 18M6 6l12 12"/></svg></div>
</div>
<div class="addf" style="top:353.35px">+ Add Field</div>
<div class="foot" style="top:390.35px"><div class="addr">+ Add Relationship</div><div class="pill">6 fields</div></div>
</div>
</div>
<div id="topbar"></div>
<div id="botline"></div>
</body></html>
